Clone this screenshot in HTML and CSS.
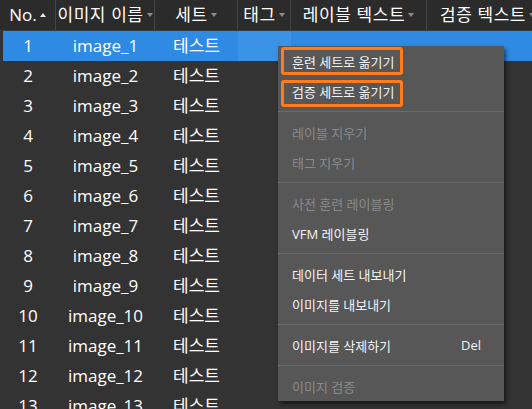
FILE: index.html
```html
<!DOCTYPE html>
<html lang="ko">
<head>
<meta charset="utf-8">
<title>이미지 목록</title>
<link rel="stylesheet" href="styles.css">
</head>
<body>
<div class="view">
  <div class="grid head">
    <div class="hcell"><span>No.</span><i class="tri up"></i></div>
    <div class="hcell"><span class="ko">이미지 이름</span><i class="tri"></i></div>
    <div class="hcell"><span class="ko">세트</span><i class="tri"></i></div>
    <div class="hcell"><span class="ko">태그</span><i class="tri"></i></div>
    <div class="hcell"><span class="ko">레이블 텍스트</span><i class="tri"></i></div>
    <div class="hcell"><span class="ko">검증 텍스트</span><i class="tri"></i></div>
  </div>
  <div class="grid row selected"><div class="cell">1</div><div class="cell">image_1</div><div class="cell">테스트</div><div class="cell focus"></div><div class="cell"></div><div class="cell"></div></div>
  <div class="grid row"><div class="cell">2</div><div class="cell">image_2</div><div class="cell">테스트</div><div class="cell"></div><div class="cell"></div><div class="cell"></div></div>
  <div class="grid row"><div class="cell">3</div><div class="cell">image_3</div><div class="cell">테스트</div><div class="cell"></div><div class="cell"></div><div class="cell"></div></div>
  <div class="grid row"><div class="cell">4</div><div class="cell">image_4</div><div class="cell">테스트</div><div class="cell"></div><div class="cell"></div><div class="cell"></div></div>
  <div class="grid row"><div class="cell">5</div><div class="cell">image_5</div><div class="cell">테스트</div><div class="cell"></div><div class="cell"></div><div class="cell"></div></div>
  <div class="grid row"><div class="cell">6</div><div class="cell">image_6</div><div class="cell">테스트</div><div class="cell"></div><div class="cell"></div><div class="cell"></div></div>
  <div class="grid row"><div class="cell">7</div><div class="cell">image_7</div><div class="cell">테스트</div><div class="cell"></div><div class="cell"></div><div class="cell"></div></div>
  <div class="grid row"><div class="cell">8</div><div class="cell">image_8</div><div class="cell">테스트</div><div class="cell"></div><div class="cell"></div><div class="cell"></div></div>
  <div class="grid row"><div class="cell">9</div><div class="cell">image_9</div><div class="cell">테스트</div><div class="cell"></div><div class="cell"></div><div class="cell"></div></div>
  <div class="grid row"><div class="cell">10</div><div class="cell">image_10</div><div class="cell">테스트</div><div class="cell"></div><div class="cell"></div><div class="cell"></div></div>
  <div class="grid row"><div class="cell">11</div><div class="cell">image_11</div><div class="cell">테스트</div><div class="cell"></div><div class="cell"></div><div class="cell"></div></div>
  <div class="grid row"><div class="cell">12</div><div class="cell">image_12</div><div class="cell">테스트</div><div class="cell"></div><div class="cell"></div><div class="cell"></div></div>
  <div class="grid row"><div class="cell">13</div><div class="cell">image_13</div><div class="cell">테스트</div><div class="cell"></div><div class="cell"></div><div class="cell"></div></div>

  <div class="menu">
    <div class="item mark first">훈련 세트로 옮기기</div>
    <div class="item mark second">검증 세트로 옮기기</div>
    <div class="sep"></div>
    <div class="item off">레이블 지우기</div>
    <div class="item off">태그 지우기</div>
    <div class="sep"></div>
    <div class="item off">사전 훈련 레이블링</div>
    <div class="item">VFM 레이블링</div>
    <div class="sep"></div>
    <div class="item">데이터 세트 내보내기</div>
    <div class="item">이미지를 내보내기</div>
    <div class="sep"></div>
    <div class="item"><span>이미지를 삭제하기</span><span class="key">Del</span></div>
    <div class="sep"></div>
    <div class="item off">이미지 검증</div>
  </div>
</div>
</body>
</html>
```

FILE: styles.css
```css
html, body {
  margin: 0;
  padding: 0;
  background: #333333;
}

.view {
  position: relative;
  width: 532px;
  height: 409px;
  overflow: hidden;
  background: #333333;
  font-family: "Open Sans", "Noto Sans CJK KR", sans-serif;
  color: #ffffff;
}

.grid {
  display: grid;
  grid-template-columns: 56px 99px 83px 53px 136px 122px;
  width: 549px;
}

.head {
  height: 30px;
  background: #2b2b2b;
  border-bottom: 1px solid #3b3b3b;
}

.hcell {
  display: flex;
  align-items: center;
  justify-content: center;
  gap: 3px;
  font-size: 17px;
  line-height: 30px;
  white-space: nowrap;
  overflow: visible;
  border-right: 1px solid #454545;
  box-sizing: border-box;
}

.hcell .ko {
  letter-spacing: 0.6px;
}

.tri {
  display: inline-block;
  width: 0;
  height: 0;
  border-left: 3px solid transparent;
  border-right: 3px solid transparent;
  border-top: 4px solid #8c8c8c;
  flex: none;
}

.tri.up {
  border-top: 0;
  border-bottom: 4px solid #e8e8e8;
}

.row {
  height: 30px;
}

.cell {
  display: flex;
  align-items: center;
  justify-content: center;
  font-size: 17px;
  line-height: 30px;
  white-space: nowrap;
}

.selected {
  background: linear-gradient(to right, transparent 3px, #2f8ae4 3px);
}

.selected .focus {
  background: #3b93e7;
}

.menu {
  position: absolute;
  left: 278px;
  top: 46px;
  width: 226px;
  background: #575757;
  box-shadow: 2px 3px 4px rgba(0, 0, 0, 0.55);
  font-size: 13px;
  color: #f4f4f4;
}

.item {
  position: relative;
  display: flex;
  align-items: center;
  height: 30px;
  padding: 0 23px 0 14px;
  white-space: nowrap;
}

.item.off {
  color: #8a8a8a;
}

.key {
  margin-left: auto;
  font-family: "Open Sans", sans-serif;
}

.sep {
  height: 1px;
  margin: 5px 0;
  background: #6a6a6a;
}

.mark::after {
  content: "";
  position: absolute;
  left: 3px;
  width: 122px;
  box-sizing: border-box;
  border: 3px solid #ff7b1c;
  border-radius: 3px;
}

.mark.first::after {
  top: 1px;
  height: 28px;
}

.mark.second::after {
  top: 4px;
  height: 27px;
}
```
